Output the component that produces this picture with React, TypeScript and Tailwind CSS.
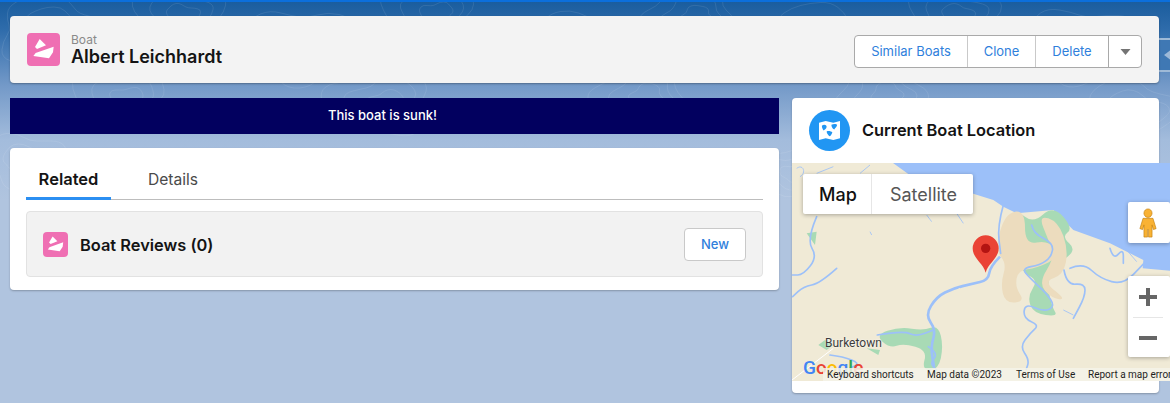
const FONT = "font-['Inter','Liberation_Sans',sans-serif]";

type Pt = [number, number];

// rounds a list of points into a curve through the midpoints
function smooth(pts: Pt[], closed = false) {
  const mid = (a: Pt, b: Pt): Pt => [(a[0] + b[0]) / 2, (a[1] + b[1]) / 2];
  if (closed) {
    const n = pts.length;
    const start = mid(pts[n - 1], pts[0]);
    let d = `M${start[0]} ${start[1]}`;
    pts.forEach((p, i) => {
      const m = mid(p, pts[(i + 1) % n]);
      d += ` Q${p[0]} ${p[1]} ${m[0]} ${m[1]}`;
    });
    return d + " Z";
  }
  let d = `M${pts[0][0]} ${pts[0][1]}`;
  for (let i = 1; i < pts.length - 1; i++) {
    const m = mid(pts[i], pts[i + 1]);
    d += ` Q${pts[i][0]} ${pts[i][1]} ${m[0]} ${m[1]}`;
  }
  const last = pts[pts.length - 1];
  return d + ` L${last[0]} ${last[1]}`;
}

function contour(cx: number, cy: number, r: number, seed: number) {
  const pts: Pt[] = [];
  for (let i = 0; i < 18; i++) {
    const t = (i / 18) * Math.PI * 2;
    const k = 1 + 0.18 * Math.sin(3 * t + seed) + 0.1 * Math.sin(5 * t + seed * 2);
    pts.push([Math.round(cx + Math.cos(t) * r * k * 1.5), Math.round(cy + Math.sin(t) * r * k)]);
  }
  return smooth(pts, true);
}

const CONTOURS: [number, number, number][] = [
  [50, 30, 34], [175, 12, 30], [300, 45, 36], [430, 10, 30], [560, 48, 34], [690, 14, 30], [820, 42, 36],
  [950, 12, 30], [1080, 44, 36], [120, 95, 30], [380, 100, 34], [640, 92, 30], [880, 90, 28], [1130, 110, 30],
  [25, 160, 26], [785, 170, 22],
];

function BoatGlyph({ className }: { className: string }) {
  return (
    <svg viewBox="0 0 99 99" className={className} fill="#fff">
      <path d="M38 18 L57 37 L30 48 L24 42 Z" />
      <path d="M17 63 L80 41 L78 58 L66 76 L19 69 L26 60 Z" />
    </svg>
  );
}

function TopoLines() {
  return (
    <svg className="absolute inset-0 w-full h-full" viewBox="0 0 1170 403" fill="none" stroke="#ffffff" strokeOpacity="0.12" strokeWidth="0.8">
      {CONTOURS.map(([x, y, r], i) => (
        <g key={i}>
          <path d={contour(x, y, r, i + 1)} />
          <path d={contour(x + 4, y + 2, r * 0.68, i + 1)} />
          <path d={contour(x + 7, y + 3, r * 0.36, i + 1)} />
        </g>
      ))}
    </svg>
  );
}

const RIVERS: Pt[][] = [
  [[640, 15], [622, 80], [632, 160]],
  [[725, 75], [730, 100], [790, 130], [785, 170], [750, 195], [695, 205], [720, 235], [770, 280], [795, 320], [760, 335], [705, 310], [700, 355], [748, 375], [720, 400], [690, 440], [718, 480], [708, 510]],
  [[822, 210], [830, 255], [885, 250], [885, 290], [850, 355]],
  [[840, 205], [880, 188], [930, 235], [1000, 255], [1062, 190]],
  [[960, 145], [970, 180], [1000, 145], [1000, 190]],
  [[80, 50], [50, 120], [82, 170], [40, 225], [6, 225]],
  [[140, 205], [90, 250], [40, 260], [8, 290]],
  [[262, 405], [340, 392], [380, 410], [430, 390]],
  [[120, 465], [160, 470], [210, 490], [180, 505]],
  [[415, 440], [445, 460], [420, 490], [440, 510]],
];

function MapArt() {
  return (
    <svg viewBox="6 -111 1134 654" className="absolute inset-0 w-full h-full blur-[0.4px]" fill="none">
      <rect x="6" y="-111" width="1134" height="654" fill="#f0ead6" />
      {/* sea */}
      <path d="M309 -111 L380 -60 L545 -20 L610 0 L640 20 L680 40 L790 30 L850 90 L960 130 L1060 180 L1058 205 L1140 212 L1140 -111 Z" fill="#9cc0f9" />
      {/* mangrove and tidal flats */}
      <path d={smooth([[680, 30], [730, 70], [790, 15], [850, 85], [815, 110], [860, 150], [805, 190], [770, 240], [785, 320], [805, 350], [730, 340], [712, 290], [745, 240], [690, 215], [695, 140], [695, 90]], true)} fill="#a8dab5" />
      <path d={smooth([[645, 40], [705, 30], [705, 135], [775, 120], [810, 170], [740, 205], [685, 210], [675, 260], [705, 305], [645, 310], [632, 250], [650, 190], [615, 150]], true)} fill="#ecdcbe" />
      <path d={smooth([[745, 45], [805, 65], [835, 150], [820, 225], [760, 245], [830, 300], [785, 295], [745, 250], [795, 170], [775, 120]], true)} fill="#ecdcbe" />
      <path d={smooth([[255, 405], [330, 380], [400, 392], [445, 375], [460, 440], [445, 510], [395, 510], [412, 450], [340, 430], [300, 445]], true)} fill="#a8dab5" />
      <path d="M85 435 L105 420 L130 435 L110 450 Z M230 445 L270 450 L265 465 Z M50 100 L80 95 L75 135 Z" fill="#a8dab5" />
      {/* main river */}
      <path d={smooth([[630, 170], [600, 200], [595, 240], [545, 252], [490, 265], [440, 290], [406, 345], [438, 390], [422, 440], [432, 500]])} stroke="#9cc0f9" strokeWidth="8" />
      <path d="M475 285 L510 265" stroke="#f0ead6" strokeWidth="3" />
      {/* delta channels */}
      <g stroke="#9cc0f9" strokeWidth="5" strokeLinecap="round">
        {RIVERS.map((r, i) => <path key={i} d={smooth(r)} />)}
      </g>
      <g stroke="#9cc0f9" strokeWidth="2.5">
        <path d="M820 330 L850 345 M1010 150 L1040 185 M240 95 L245 105 M500 40 L520 70 M410 45 L425 65 M20 -95 C40 -110 50 -80 30 -70 M80 -80 L130 -100 M210 -80 L240 -105" />
      </g>
      <path d="M6 540 L130 445" stroke="#ffffff" strokeWidth="3" />
      {/* pin */}
      <path d="M587 218 C580 190 548 175 548 145 A39 39 0 0 1 626 145 C626 175 594 190 587 218 Z" fill="#ea4335" />
      <circle cx="587" cy="145" r="14" fill="#b31412" />
    </svg>
  );
}

function MapControls() {
  return (
    <>
      <div className="absolute left-[11px] top-[11px] h-[40px] flex bg-white rounded-[2px] shadow-[0_1px_4px_rgba(0,0,0,0.3)]">
        <div className="w-[69px] flex items-center justify-center text-[18px] font-medium text-[#111] border-r border-[#e6e6e6] pl-[2px]">Map</div>
        <div className="w-[101px] flex items-center justify-center text-[18px] text-[#565656] pl-[2px]">Satellite</div>
      </div>
      <div className="absolute left-[336px] top-[39px] w-[42px] h-[41px] bg-white rounded-[2px] flex items-center pl-[11px] shadow-[0_1px_4px_rgba(0,0,0,0.3)]">
        <svg viewBox="0 0 20 32" className="w-[18px] h-[30px]" fill="#f9b234" stroke="#c07f10" strokeWidth="0.7" preserveAspectRatio="none">
          <circle cx="10" cy="5.5" r="4.5" />
          <path d="M4.5 11 H15.5 L19 22 L16 23 L14.5 18 V31 H10.6 V23 H9.4 V31 H5.5 V18 L4 23 L1 22 Z" />
        </svg>
      </div>
      <div className="absolute left-[336px] top-[113px] w-[42px] h-[81px] bg-white rounded-[2px] flex flex-col items-center pr-[2px] shadow-[0_1px_4px_rgba(0,0,0,0.3)]">
        <div className="h-[41px] w-full flex items-center justify-center">
          <svg viewBox="0 0 18 18" className="w-[18px] h-[18px]" fill="#666"><path d="M7 0h4v7h7v4h-7v7H7v-7H0V7h7z" /></svg>
        </div>
        <div className="w-[30px] h-px bg-[#e6e6e6]" />
        <div className="h-[39px] w-full flex items-center justify-center">
          <svg viewBox="0 0 18 18" className="w-[18px] h-[18px]" fill="#666"><path d="M0 7h18v4H0z" /></svg>
        </div>
      </div>
      <div className="absolute left-[11px] top-[194px] text-[19px] leading-[22px] font-medium font-['Roboto',sans-serif] whitespace-nowrap">
        <span className="text-[#4285f4]">G</span>
        <span className="text-[#ea4335]">o</span>
        <span className="text-[#fbbc04]">o</span>
        <span className="text-[#4285f4]">g</span>
        <span className="text-[#34a853]">l</span>
        <span className="text-[#ea4335]">e</span>
      </div>
      <div className="absolute left-[31px] top-[205px] h-[13px] w-[347px] overflow-hidden flex items-center whitespace-nowrap bg-[#f5f3e9]/85 text-[#1f1f1f] text-[10px] font-['Roboto',sans-serif] pl-[4px]">
        <span className="w-[100px] shrink-0">Keyboard shortcuts</span>
        <span className="w-[89px] shrink-0">Map data ©2023</span>
        <span className="w-[72px] shrink-0">Terms of Use</span>
        <span className="shrink-0">Report a map error</span>
      </div>
      <div className="absolute left-[33px] top-[173px] text-[12px] leading-[14px] text-[#3c3c3c] font-['Roboto',sans-serif] [text-shadow:0_0_2px_#fff]">Burketown</div>
    </>
  );
}

export default function App() {
  return (
    <div className={`relative w-[1170px] h-[403px] overflow-hidden bg-[linear-gradient(180deg,#1a5d9e_2px,#2f6cab_30px,#7399c8_85px,#a3bcdc_140px,#b0c4df_200px,#b0c4df_100%)] ${FONT}`}>
      <TopoLines />
      <div className="absolute inset-x-0 top-0 h-[2px] bg-[#0b6fdc]" />

      {/* collapsed side panel handle */}
      <div className="absolute left-[1155px] top-[38px] w-[30px] h-[34px] rounded-[4px] border-2 border-[#c9d6e6]/70 bg-[#3f78b4] flex items-center pl-[7px]">
        <svg viewBox="0 0 8 12" className="w-[7px] h-[12px]" fill="#9db9d8"><path d="M8 0v12L0 6z" /></svg>
      </div>

      <div className="relative px-[10px] pt-[16px]">
        {/* Record header */}
        <div className="w-[1149px] h-[67px] bg-[#f3f3f3] rounded-[4px] shadow-[0_1px_2px_rgba(0,0,0,0.3)] flex items-center justify-between pl-[17px] pr-[17px]">
          <div className="flex items-center gap-[11px]">
            <div className="w-[33px] h-[33px] rounded-[4px] bg-[#ef6fb3]">
              <BoatGlyph className="w-[33px] h-[33px]" />
            </div>
            <div className="flex flex-col mt-[1px]">
              <span className="text-[12px] leading-[14px] text-[#8a8a8a]">Boat</span>
              <span className="text-[18px] leading-[20px] font-semibold text-[#141414]">Albert Leichhardt</span>
            </div>
          </div>
          <div className="flex h-[33px] mt-[4px] rounded-[4px] border border-[#a9a9a9] bg-white text-[13px] text-[#2f7fdc]">
            <button className="w-[113px] border-r border-[#c9c9c9]">Similar Boats</button>
            <button className="w-[68px] border-r border-[#c9c9c9]">Clone</button>
            <button className="w-[73px] border-r border-[#a9a9a9]">Delete</button>
            <button className="w-[32px] flex items-center justify-center">
              <svg viewBox="0 0 10 6" className="w-[11px] h-[6px]" fill="#747474"><path d="M0 0h10L5 6z" /></svg>
            </button>
          </div>
        </div>

        <div className="flex gap-[13px] mt-[15px]">
          {/* Left column */}
          <div className="w-[769px] flex flex-col gap-[14px]">
            <div className="h-[36px] bg-[#02005f] flex items-center justify-center pr-[24px] text-[13px] font-medium text-white">
              This boat is sunk!
            </div>
            <div className="h-[142px] bg-white rounded-[4px] shadow-[0_1px_2px_rgba(0,0,0,0.25)] px-[16px] pt-[13px]">
              <div className="h-[39px] flex border-b border-[#bdbdbd]">
                <div className="w-[85px] h-[39px] flex items-center justify-center text-[16.5px] font-semibold text-[#141414] border-b-[3px] border-[#2b8ff2] pt-[1px]">Related</div>
                <div className="w-[122px] h-[38px] flex items-center justify-center pl-[2px] text-[15.6px] text-[#4a4a4a]">Details</div>
              </div>
              <div className="mt-[11px] h-[66px] rounded-[4px] bg-[#f2f2f2] border border-[#e2e2e2] flex items-center justify-between pl-[16px] pr-[16px]">
                <div className="flex items-center gap-[12px]">
                  <div className="w-[25px] h-[25px] rounded-[4px] bg-[#ef6fb3]">
                    <BoatGlyph className="w-[25px] h-[25px]" />
                  </div>
                  <span className="text-[16.4px] leading-[26px] mt-[1px] font-semibold text-[#141414]">Boat Reviews (0)</span>
                </div>
                <button className="w-[62px] h-[33px] pt-[2px] bg-white rounded-[4px] border border-[#c9c9c9] text-[13px] font-medium text-[#2f7fdc]">New</button>
              </div>
            </div>
          </div>

          {/* Map card */}
          <div className="w-[367px] h-[295px] bg-white rounded-[4px] shadow-[0_1px_2px_rgba(0,0,0,0.25)]">
            <div className="h-[65px] flex items-center pl-[17px] gap-[12px]">
              <div className="w-[41px] h-[41px] rounded-full bg-[#2196f3] flex items-center justify-center">
                <svg viewBox="0 0 24 22" className="w-[23px] h-[21px]" fill="#fff">
                  <path d="M1 3 L8 1 L16 3 L23 1 V19 L16 21 L8 19 L1 21 Z" />
                  <path d="M4 6 C6 4 9 5 9 7 C9 9 7 10 6 11 C5 10 4 8 4 6 Z M14 5 C16 4 19 4 20 5 C20 7 18 8 17 10 C15 9 14 7 14 5 Z M9 12 C11 11 14 12 15 13 C14 15 13 17 12 17 C11 16 9 14 9 12 Z" fill="#2196f3" />
                </svg>
              </div>
              <span className="text-[16.4px] font-semibold text-[#141414]">Current Boat Location</span>
            </div>
            <div className="relative w-[378px] h-[218px] overflow-hidden">
              <MapArt />
              <MapControls />
            </div>
          </div>
        </div>
      </div>
    </div>
  );
}
